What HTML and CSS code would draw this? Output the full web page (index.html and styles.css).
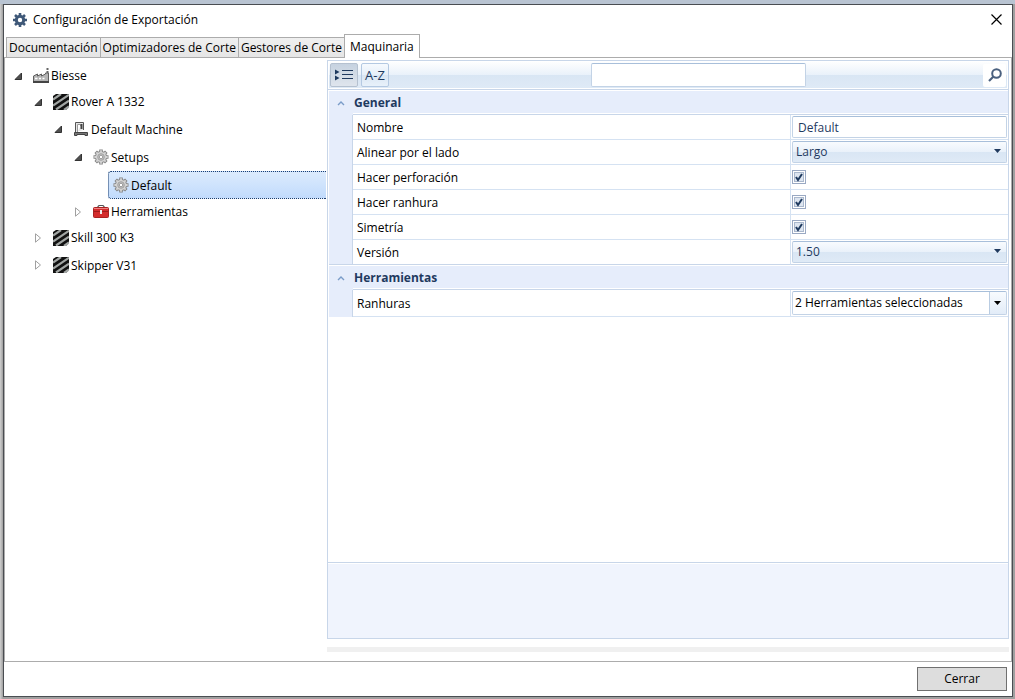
FILE: index.html
```
<!DOCTYPE html>
<html lang="es">
<head>
    <meta charset="UTF-8">
    <meta name="viewport" content="width=device-width, initial-scale=1.0">
    <title>Configuración de Exportación</title>
    <link rel="stylesheet" href="styles.css">
</head>
<body>
    <!-- Shared icons -->
    <svg class="defs" width="0" height="0" aria-hidden="true">
        <symbol id="gear" viewBox="0 0 16 16">
            <path d="M8 0.500v15M0.500 8h15M2.700 2.700l10.600 10.600M2.700 13.300L13.300 2.700" stroke="#858585" stroke-width="3.600"/>
            <circle cx="8" cy="8" r="5.600" fill="#d4d4d4" stroke="#8a8a8a"/>
            <path d="M8 1.300v13.400M1.300 8h13.400M3.300 3.300l9.400 9.400M3.300 12.700L12.700 3.300" stroke="#d4d4d4" stroke-width="1.800"/>
            <circle cx="8" cy="8" r="3.300" fill="#c2c2c2" stroke="#a2a2a2"/>
            <circle cx="8" cy="8" r="1.700" fill="#fff" stroke="#8f8f8f" stroke-width="0.800"/>
        </symbol>
        <symbol id="stripes" viewBox="0 0 16 16">
            <rect width="16" height="16" fill="#111"/>
            <path d="M0 5.500L8 0M0 11.500L16 0.800M3 15.500L16 6.700M11 16L16 12.500" stroke="#a2a6a4" stroke-width="2.200"/>
            <path d="M0 0h3L0 2zM16 13.500v2.500h-3z" fill="#fff"/>
        </symbol>
        <symbol id="open" viewBox="0 0 8 8">
            <path d="M7.500 1V7.500H1z" fill="#505050" stroke="#333"/>
        </symbol>
        <symbol id="closed" viewBox="0 0 8 10">
            <path d="M1.500 0.800L6.500 5L1.500 9.200z" fill="#fff" stroke="#a0a0a0"/>
        </symbol>
        <symbol id="chevron" viewBox="0 0 8 6">
            <path d="M1 5L4 2L7 5" fill="none" stroke="#7a9cc8" stroke-width="1.400"/>
        </symbol>
    </svg>

    <div class="window">
        <header class="titlebar">
            <svg class="icon" viewBox="0 0 16 16" aria-hidden="true">
                <circle cx="8" cy="8" r="3.700" fill="none" stroke="#3f5878" stroke-width="3"/>
                <path d="M8 1v3M8 12v3M1 8h3M12 8h3M3 3l2.200 2.200M10.800 10.800L13 13M3 13l2.200-2.200M10.800 5.200L13 3" stroke="#3f5878" stroke-width="2.600"/>
            </svg>
            <h1>Configuración de Exportación</h1>
            <button class="close" type="button" aria-label="Cerrar ventana">
                <svg width="11" height="11" viewBox="0 0 11 11"><path d="M0.500 0.500L10.500 10.500M10.500 0.500L0.500 10.500" stroke="#000" stroke-width="1.200"/></svg>
            </button>
        </header>

        <div class="tabs" role="tablist">
            <button type="button" role="tab">Documentación</button>
            <button type="button" role="tab">Optimizadores de Corte</button>
            <button type="button" role="tab">Gestores de Corte</button>
            <button type="button" role="tab" class="active" aria-selected="true">Maquinaria</button>
        </div>

        <main class="panel">
            <nav class="tree" aria-label="Máquinas">
                <ul>
                    <li>
                        <div class="node">
                            <button class="expander" type="button" aria-label="Contraer"><svg width="8" height="8"><use href="#open"/></svg></button>
                            <a href="#">
                                <svg class="icon" viewBox="0 0 16 16">
                                    <path d="M0.500 14.500V8L4.500 6v2l4-2v2l4-2V5h3v9.500z" fill="#b4b4b4" stroke="#5f5f5f"/>
                                    <path d="M0 14h16" stroke="#444" stroke-width="2"/>
                                    <path d="M2 10.500h2.500M6 10.500h2M9.500 10.500h2" stroke="#fff" stroke-width="1.500"/>
                                    <path d="M14.500 0v5" stroke="#666" stroke-width="2" stroke-dasharray="2 1"/>
                                </svg>
                                <span>Biesse</span>
                            </a>
                        </div>
                        <ul>
                            <li>
                                <div class="node">
                                    <button class="expander" type="button" aria-label="Contraer"><svg width="8" height="8"><use href="#open"/></svg></button>
                                    <a href="#"><svg class="icon"><use href="#stripes"/></svg><span>Rover A 1332</span></a>
                                </div>
                                <ul>
                                    <li>
                                        <div class="node tall">
                                            <button class="expander" type="button" aria-label="Contraer"><svg width="8" height="8"><use href="#open"/></svg></button>
                                            <a href="#">
                                                <svg class="icon" viewBox="0 0 16 16">
                                                    <path d="M2.500 11V1.500h8V9" fill="#e4e4e4" stroke="#555"/>
                                                    <path d="M4.500 11V3.500h3V5" fill="#fff" stroke="#999"/>
                                                    <path d="M8.500 3v5" stroke="#444" stroke-width="2"/>
                                                    <path d="M1.500 14.500v-3h13v3h-2.500v-1h-8v1z" fill="#777" stroke="#444"/>
                                                </svg>
                                                <span>Default Machine</span>
                                            </a>
                                        </div>
                                        <ul>
                                            <li>
                                                <div class="node tall">
                                                    <button class="expander" type="button" aria-label="Contraer"><svg width="8" height="8"><use href="#open"/></svg></button>
                                                    <a href="#"><svg class="icon"><use href="#gear"/></svg><span>Setups</span></a>
                                                </div>
                                                <ul>
                                                    <li>
                                                        <div class="node tall">
                                                            <a href="#" class="selected"><svg class="icon"><use href="#gear"/></svg><span>Default</span></a>
                                                        </div>
                                                    </li>
                                                </ul>
                                            </li>
                                            <li>
                                                <div class="node">
                                                    <button class="expander" type="button" aria-label="Expandir"><svg width="8" height="10"><use href="#closed"/></svg></button>
                                                    <a href="#">
                                                        <svg class="icon" viewBox="0 0 16 16">
                                                            <path d="M5 4V2.500L6 1.500h4l1 1V4" fill="none" stroke="#555" stroke-width="1.200"/>
                                                            <rect x="0.500" y="3.500" width="15" height="10" rx="1" fill="#d42c2c" stroke="#a82222"/>
                                                            <path d="M1 4.500h14" stroke="#f08080"/>
                                                            <path d="M1 7.500h14" stroke="#9e1c1c"/>
                                                            <rect x="7" y="6" width="2" height="4" fill="#eee"/>
                                                        </svg>
                                                        <span>Herramientas</span>
                                                    </a>
                                                </div>
                                            </li>
                                        </ul>
                                    </li>
                                </ul>
                            </li>
                            <li>
                                <div class="node">
                                    <button class="expander" type="button" aria-label="Expandir"><svg width="8" height="10"><use href="#closed"/></svg></button>
                                    <a href="#"><svg class="icon"><use href="#stripes"/></svg><span>Skill 300 K3</span></a>
                                </div>
                            </li>
                            <li>
                                <div class="node tall">
                                    <button class="expander" type="button" aria-label="Expandir"><svg width="8" height="10"><use href="#closed"/></svg></button>
                                    <a href="#"><svg class="icon"><use href="#stripes"/></svg><span>Skipper V31</span></a>
                                </div>
                            </li>
                        </ul>
                    </li>
                </ul>
            </nav>

            <div class="content">
                <section class="property-grid">
                    <div class="toolbar">
                        <div class="sorting">
                            <button type="button" class="pressed" aria-label="Por categoría">
                                <svg width="18" height="12" viewBox="0 0 18 12">
                                    <path d="M0 0.500L4.500 3L0 5.500zM0 6.500L4.500 9L0 11.500z" fill="#1f3a5f"/>
                                    <path d="M7 1.500h11M7 5.500h11M7 9.500h11" stroke="#1f3a5f"/>
                                </svg>
                            </button>
                            <button type="button">A-Z</button>
                        </div>
                        <input class="search" type="text" aria-label="Buscar">
                        <button type="button" class="find" aria-label="Buscar">
                            <svg width="14" height="14" viewBox="0 0 14 14">
                                <circle cx="8.500" cy="5.500" r="4.300" fill="none" stroke="#4a607f" stroke-width="2"/>
                                <path d="M5.500 8.500L1 13" stroke="#4a607f" stroke-width="2.200"/>
                            </svg>
                        </button>
                    </div>

                    <table>
                        <colgroup>
                            <col class="col-gutter">
                            <col>
                            <col class="col-value">
                        </colgroup>
                        <tbody>
                            <tr class="category">
                                <td class="gutter"><svg width="8" height="6"><use href="#chevron"/></svg></td>
                                <th colspan="2">General</th>
                            </tr>
                            <tr>
                                <td class="gutter"></td>
                                <td class="name"><label for="nombre">Nombre</label></td>
                                <td><input type="text" id="nombre" value="Default"></td>
                            </tr>
                            <tr>
                                <td class="gutter"></td>
                                <td class="name"><label for="lado">Alinear por el lado</label></td>
                                <td><select id="lado"><option>Largo</option><option>Ancho</option></select></td>
                            </tr>
                            <tr>
                                <td class="gutter"></td>
                                <td class="name"><label for="perforacion">Hacer perforación</label></td>
                                <td><input type="checkbox" id="perforacion" checked></td>
                            </tr>
                            <tr>
                                <td class="gutter"></td>
                                <td class="name"><label for="ranhura">Hacer ranhura</label></td>
                                <td><input type="checkbox" id="ranhura" checked></td>
                            </tr>
                            <tr>
                                <td class="gutter"></td>
                                <td class="name"><label for="simetria">Simetría</label></td>
                                <td><input type="checkbox" id="simetria" checked></td>
                            </tr>
                            <tr class="last">
                                <td class="gutter"></td>
                                <td class="name"><label for="version">Versión</label></td>
                                <td><select id="version"><option>1.50</option></select></td>
                            </tr>
                        </tbody>
                        <tbody>
                            <tr class="category">
                                <td class="gutter"><svg width="8" height="6"><use href="#chevron"/></svg></td>
                                <th colspan="2">Herramientas</th>
                            </tr>
                            <tr class="high">
                                <td class="gutter"></td>
                                <td class="name"><label for="ranhuras">Ranhuras</label></td>
                                <td><select id="ranhuras" class="multi"><option>2 Herramientas seleccionadas</option></select></td>
                            </tr>
                        </tbody>
                    </table>

                    <div class="description"></div>
                </section>
                <div class="strip"></div>
            </div>
        </main>

        <footer>
            <button type="button">Cerrar</button>
        </footer>
    </div>
</body>
</html>
```
FILE: styles.css
```
* {
    box-sizing: border-box;
}

body {
    margin: 0;
    padding: 4px 2px 2px 3px;
    min-height: 100vh;
    display: flex;
    font-family: "Open Sans", "Noto Sans", sans-serif;
    font-size: 12px;
    line-height: 16px;
    color: #000;
    background: linear-gradient(#b9c4d2, #b9c4d2) no-repeat top / 100% 4px,
        linear-gradient(90deg, #d0d0d0, #a0a0a0 3px);
}

button, input, select {
    font: inherit;
    color: inherit;
    margin: 0;
    padding: 0;
}

svg {
    display: block;
}

.defs {
    position: absolute;
}

.icon {
    width: 16px;
    height: 16px;
    flex: none;
}

.window {
    flex: 1;
    min-width: 0;
    display: flex;
    flex-direction: column;
    background: #fff;
    border: 1px solid #4a4d52;
}

.titlebar {
    display: flex;
    align-items: center;
    height: 29px;
    padding: 0 10px 0 8px;
}

.titlebar h1 {
    margin: 0 auto 0 5px;
    padding-top: 1px;
    font-size: 12px;
    font-weight: normal;
}

.close {
    border: none;
    background: none;
}

/* Tabs */
.tabs {
    display: flex;
    align-items: flex-end;
    padding-left: 2px;
    height: 23px;
}

.tabs button {
    height: 20px;
    margin-right: -1px;
    padding: 0 2px;
    white-space: nowrap;
    border: 1px solid #acacac;
    border-bottom: none;
    background: linear-gradient(#f0f0f0, #e5e5e5);
}

.tabs .active {
    height: 24px;
    margin-bottom: -1px;
    padding: 0 5px;
    background: #fff;
    z-index: 1;
}

.panel {
    flex: 1;
    display: flex;
    border: 1px solid #acacac;
}

/* Tree */
.tree {
    flex: 0 0 322px;
    padding: 5px 1px 0 5px;
}

.tree ul {
    list-style: none;
    margin: 0;
    padding: 0;
}

.tree ul ul {
    padding-left: 20px;
}

.node {
    display: flex;
    align-items: center;
    height: 26px;
}

.node.tall {
    height: 28px;
}

.node a {
    flex: 1;
    height: 100%;
    display: flex;
    align-items: center;
    gap: 2px;
    margin-left: 18px;
    padding-left: 5px;
    color: #000;
    text-decoration: none;
    white-space: nowrap;
}

.node.tall span {
    padding-top: 2px;
}

.expander {
    width: 16px;
    height: 16px;
    margin-right: -16px;
    display: flex;
    align-items: center;
    justify-content: center;
    border: none;
    background: none;
}

.node .selected {
    border: 1px dotted #1d3f6e;
    border-right: none;
    border-radius: 3px 0 0 3px;
    padding-left: 4px;
    background: linear-gradient(#dcebfd, #c1dbfc);
}

/* Property grid */
.content {
    flex: 1;
    min-width: 0;
    display: flex;
    flex-direction: column;
    padding: 2px 2px 9px 0;
}

.property-grid {
    flex: 1;
    display: flex;
    flex-direction: column;
    border: 1px solid #c8d6e9;
}

.toolbar {
    display: grid;
    grid-template-columns: 13fr 215px 10fr;
    align-items: center;
    height: 29px;
    padding: 0 2px;
    border-bottom: 1px solid #c8d6e9;
    background: linear-gradient(#fff, #e9f1fa 50%, #d9e6f4 51%, #dfeaf6);
    box-shadow: inset 0 0 0 1px #fff;
}

.sorting {
    display: flex;
    gap: 3px;
}

.toolbar button {
    width: 28px;
    height: 24px;
    display: flex;
    align-items: center;
    justify-content: center;
    border: 1px solid #b4c9e2;
    border-radius: 2px;
    font-size: 13px;
    color: #1f3a5f;
    background: linear-gradient(#f6fafe, #e6eff9 50%, #d9e6f4 51%, #e8f1fa);
}

.toolbar .pressed {
    border-color: #b5c1d0;
    background: linear-gradient(#c6d2e0, #dfe5ed);
}

.toolbar .find {
    width: 23px;
    height: 23px;
    justify-self: end;
    border: none;
    background: #fff;
}

input[type="text"], select {
    display: block;
    width: 100%;
    height: 22px;
    border: 1px solid #c3d3e6;
    border-top-color: #a8bfda;
    border-radius: 2px;
    outline: none;
    color: #1f3a5f;
    background: #fff;
}

input[type="text"] {
    padding: 0 5px;
}

input.search {
    height: 24px;
}

table {
    width: calc(100% - 1px);
    margin-left: 1px;
    table-layout: fixed;
    border-collapse: separate;
    border-spacing: 0;
}

.col-gutter {
    width: 24px;
}

.col-value {
    width: 217px;
}

td, th {
    height: 25px;
    padding: 0 1px;
    border-bottom: 1px solid #d5e2f2;
    text-align: left;
}

.gutter {
    padding: 0;
    border-bottom: none;
    border-right: 1px solid #c8d6e9;
    background: #e6edfb;
}

.name {
    padding: 2px 0 0 4px;
    border-right: 1px solid #d5e2f2;
}

.category .gutter {
    padding-left: 8px;
    border-right: none;
    box-shadow: inset 0 1px 0 #fff;
}

.category th {
    padding: 2px 0 0 1px;
    border-bottom-color: #c8d6e9;
    color: #1f3a5f;
    background: #e6edfb;
    box-shadow: inset 0 1px 0 #fff, inset 0 -1px 0 #fff;
}

.last td {
    border-bottom: 1px solid #c8d6e9;
}

.high td {
    height: 27px;
}

select {
    appearance: none;
    padding: 0 20px 0 3px;
    background: url("data:image/svg+xml,%3Csvg xmlns='http://www.w3.org/2000/svg' width='7' height='4'%3E%3Cpath d='M0 0h7L3.5 4z' fill='%231f3a5f'/%3E%3C/svg%3E") no-repeat right 5px top 7px,
        linear-gradient(#f8fbfe, #e9f1fa 50%, #d9e6f4 51%, #dfeaf6);
}

select.multi {
    height: 24px;
    padding-left: 2px;
    color: #000;
    background: url("data:image/svg+xml,%3Csvg xmlns='http://www.w3.org/2000/svg' width='17' height='22'%3E%3Cpath d='M0.500 0v22' stroke='%23b9cce2'/%3E%3Cpath d='M5 9h7L8.500 13z'/%3E%3C/svg%3E") no-repeat right top,
        linear-gradient(#f8fbfe, #e2ecf8) no-repeat right top / 17px 100%, #fff;
}

input[type="checkbox"] {
    display: block;
    appearance: none;
    width: 14px;
    height: 14px;
    border: 1px solid #9aa9c3;
    background: url("data:image/svg+xml,%3Csvg xmlns='http://www.w3.org/2000/svg' width='12' height='12'%3E%3Crect x='1.500' y='1.500' width='9' height='9' fill='%23dde5f0' stroke='%23aab8cd'/%3E%3C/svg%3E") center no-repeat;
}

input[type="checkbox"]:checked {
    background-image: url("data:image/svg+xml,%3Csvg xmlns='http://www.w3.org/2000/svg' width='12' height='12'%3E%3Crect x='1.500' y='1.500' width='9' height='9' fill='%23dde5f0' stroke='%23aab8cd'/%3E%3Cpath d='M3 6l2 3 4-6' fill='none' stroke='%231f3a5f' stroke-width='2'/%3E%3C/svg%3E");
}

.description {
    height: 76px;
    margin-top: auto;
    border-top: 1px solid #c8d6e9;
    background: #f0f4fd;
    box-shadow: inset 0 1px 0 #fff;
}

.strip {
    height: 5px;
    margin-top: 8px;
    background: #f0f0f0;
}

footer {
    display: flex;
    justify-content: flex-end;
    padding: 5px;
}

footer button {
    width: 90px;
    height: 24px;
    border: 1px solid #707070;
    background: #ddd;
}
```
